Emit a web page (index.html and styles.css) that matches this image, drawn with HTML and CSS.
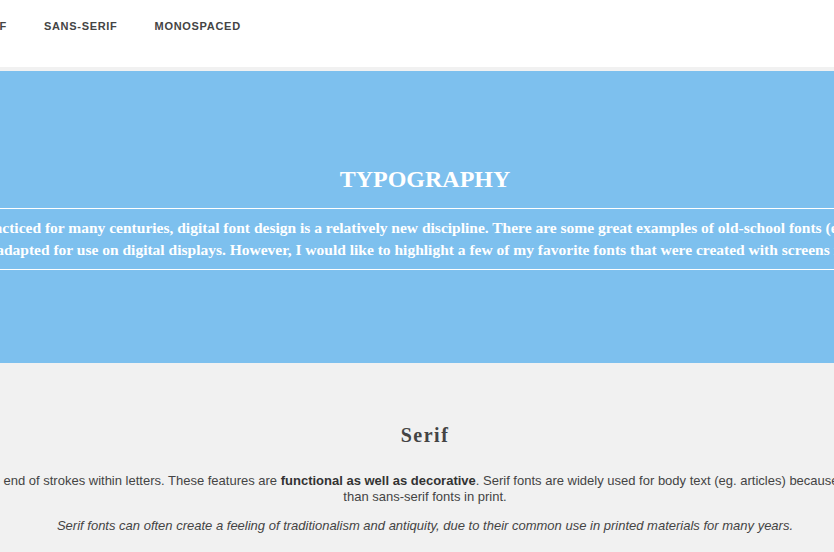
FILE: index.html
```html
<!DOCTYPE html>
<html lang="en">
<head>
<meta charset="utf-8">
<title>Typography</title>
<link rel="stylesheet" href="styles.css">
</head>
<body>
<div class="page">
  <header class="site-header">
    <nav class="nav">
      <a class="nav-link" href="#serif">Serif</a>
      <a class="nav-link" href="#sans-serif">Sans-serif</a>
      <a class="nav-link" href="#monospaced">Monospaced</a>
    </nav>
  </header>
  <section class="hero">
    <h1 class="hero-title">TYPOGRAPHY</h1>
    <p class="hero-text">
      <span class="line">Although typography has been practiced for many centuries, digital font design is a relatively new discipline. There are some great examples of old-school fonts (eg. Times New Roman) that have also</span>
      <span class="line">been adapted for use on digital displays. However, I would like to highlight a few of my favorite fonts that were created with screens in mind.</span>
    </p>
  </section>
  <section class="font-section" id="serif">
    <h2 class="section-title">Serif</h2>
    <p class="section-text">
      <span class="line">Serif fonts have thin lines (called serifs) at the end of strokes within letters. These features are <strong>functional as well as decorative</strong>. Serif fonts are widely used for body text (eg. articles) because they are all generally considered easier to read</span>
      <span class="line">than sans-serif fonts in print.</span>
    </p>
    <p class="section-note">Serif fonts can often create a feeling of traditionalism and antiquity, due to their common use in printed materials for many years.</p>
  </section>
</div>
</body>
</html>
```
FILE: styles.css
```css
html, body {
  margin: 0;
  padding: 0;
  overflow: hidden;
  background: #f1f1f1;
}

.page {
  width: 1100px;
  margin-left: -125px;
}

.site-header {
  height: 67px;
  background: #ffffff;
  border-bottom: 4px solid #f1f1f1;
  box-sizing: content-box;
}

.nav {
  display: flex;
  gap: 37px;
  padding: 18px 0 0 96px;
}

.nav-link {
  font-family: "Liberation Sans", Arial, sans-serif;
  font-size: 11px;
  line-height: 16px;
  font-weight: bold;
  letter-spacing: 0.7px;
  text-transform: uppercase;
  color: #444444;
  text-decoration: none;
}

.hero {
  height: 292px;
  background: #7dc0ee;
  display: flex;
  flex-direction: column;
  justify-content: center;
  align-items: center;
  color: #ffffff;
  font-family: "Liberation Serif", "Times New Roman", serif;
}

.hero-title {
  margin: 0 0 15px;
  font-size: 24px;
  line-height: 28px;
  font-weight: bold;
}

.hero-text {
  align-self: stretch;
  margin: 0;
  padding: 8px 0;
  border-top: 1px solid #ffffff;
  border-bottom: 1px solid #ffffff;
  font-size: 15.5px;
  line-height: 22px;
  font-weight: bold;
  display: flex;
  flex-direction: column;
  align-items: center;
  white-space: nowrap;
}

.line {
  display: block;
}

.font-section {
  padding: 60px 0 30px;
  display: flex;
  flex-direction: column;
  align-items: center;
  color: #444444;
}

.section-title {
  margin: 0 0 26px;
  font-family: "Liberation Serif", "Times New Roman", serif;
  font-size: 20px;
  line-height: 24px;
  letter-spacing: 1.5px;
  font-weight: bold;
}

.section-text {
  margin: 0 0 13px;
  font-family: "Liberation Sans", Arial, sans-serif;
  font-size: 13px;
  line-height: 16px;
  display: flex;
  flex-direction: column;
  align-items: center;
  white-space: nowrap;
}

.section-text strong {
  color: #333333;
}

.section-note {
  margin: 0;
  font-family: "Liberation Sans", Arial, sans-serif;
  font-size: 13px;
  line-height: 16px;
  font-style: italic;
  white-space: nowrap;
}
```
